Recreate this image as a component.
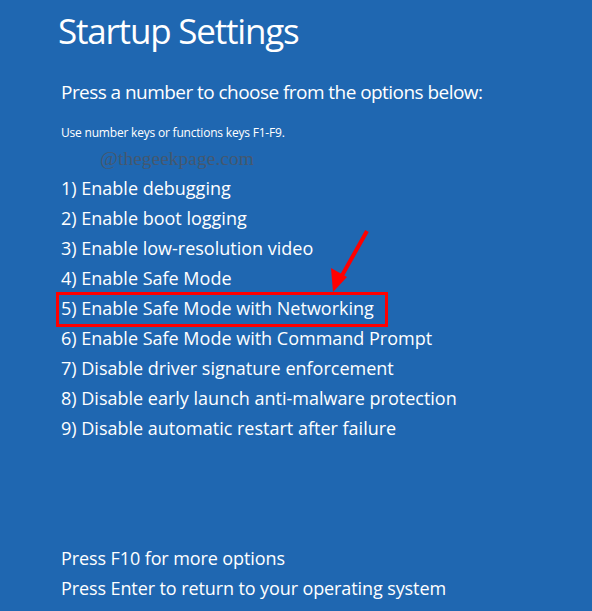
import React from "react";

const items = [
  "1) Enable debugging",
  "2) Enable boot logging",
  "3) Enable low-resolution video",
  "4) Enable Safe Mode",
  "5) Enable Safe Mode with Networking",
  "6) Enable Safe Mode with Command Prompt",
  "7) Disable driver signature enforcement",
  "8) Disable early launch anti-malware protection",
  "9) Disable automatic restart after failure",
];

export default function App() {
  return (
    <div
      className="relative w-[592px] h-[611px] overflow-hidden bg-[#1f67b1] text-white"
      style={{ fontFamily: '"Open Sans", "Noto Sans", sans-serif' }}
    >
      <div className="pl-[61px]">
        <h1 className="ml-[-3px] pt-[7px] text-[35px] leading-[48px] font-normal tracking-[-1.2px]">
          Startup Settings
        </h1>
        <p className="mt-[25px] text-[19px] leading-[24px] tracking-[-0.55px]">
          Press a number to choose from the options below:
        </p>
        <p className="mt-[21px] text-[12px] leading-[16px] tracking-[-0.2px]">
          Use number keys or functions keys F1-F9.
        </p>
        <p
          className="ml-[39px] mt-[6px] text-[19.5px] leading-[24px] text-[#44586f]"
          style={{ fontFamily: '"Liberation Serif", serif' }}
        >
          @thegeekpage.com
        </p>
        <ul className="mt-[2px] text-[18px] leading-[30px] tracking-[0px]">
          {items.map((t, i) => (
            <li key={t} className="relative">
              {t}
              {i === 4 && (
                <span className="absolute left-[-5px] top-[-1px] w-[332px] h-[35px] border-[3px] border-[#ff0000]" />
              )}
            </li>
          ))}
        </ul>
        <div className="mt-[100px] text-[18px] leading-[30px] tracking-[-0.1px]">
          <p>Press F10 for more options</p>
          <p>Press Enter to return to your operating system</p>
        </div>
      </div>
      <svg
        className="absolute left-0 top-0"
        width="592"
        height="611"
        viewBox="0 0 592 611"
      >
        <line x1="367" y1="231" x2="340" y2="279" stroke="#ff0000" strokeWidth="4" />
        <polygon points="333,292 331,268 347,277" fill="#ff0000" />
      </svg>
    </div>
  );
}
